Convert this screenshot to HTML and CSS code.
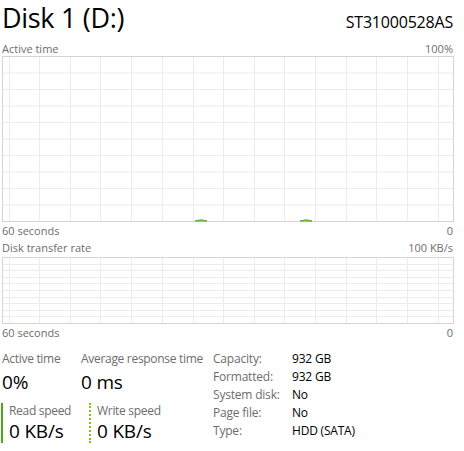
FILE: index.html
```html
<!DOCTYPE html>
<html lang="en">
<head>
  <meta charset="UTF-8">
  <title>Disk 1 (D:)</title>
  <link rel="stylesheet" href="styles.css">
</head>
<body>
  <div class="page">

    <div class="header">
      <h1 class="title">Disk 1 (D:)</h1>
      <div class="model">ST31000528AS</div>
    </div>

    <!-- Active time chart -->
    <div class="axis top">
      <span>Active time</span>
      <span>100%</span>
    </div>
    <svg class="chart big" width="452" height="166" viewBox="0 0 452 166">
      <g stroke="#ececec" stroke-width="1">
        <line x1="0" y1="17" x2="452" y2="17"/>
        <line x1="0" y1="33.5" x2="452" y2="33.5"/>
        <line x1="0" y1="50" x2="452" y2="50"/>
        <line x1="0" y1="66.5" x2="452" y2="66.5"/>
        <line x1="0" y1="83" x2="452" y2="83"/>
        <line x1="0" y1="99.5" x2="452" y2="99.5"/>
        <line x1="0" y1="116" x2="452" y2="116"/>
        <line x1="0" y1="132.5" x2="452" y2="132.5"/>
        <line x1="0" y1="149" x2="452" y2="149"/>
        <line x1="7.5" y1="0" x2="7.5" y2="166"/>
        <line x1="37.5" y1="0" x2="37.5" y2="166"/>
        <line x1="68.5" y1="0" x2="68.5" y2="166"/>
        <line x1="98.5" y1="0" x2="98.5" y2="166"/>
        <line x1="129.5" y1="0" x2="129.5" y2="166"/>
        <line x1="160.5" y1="0" x2="160.5" y2="166"/>
        <line x1="191.5" y1="0" x2="191.5" y2="166"/>
        <line x1="221.5" y1="0" x2="221.5" y2="166"/>
        <line x1="252.5" y1="0" x2="252.5" y2="166"/>
        <line x1="282.5" y1="0" x2="282.5" y2="166"/>
        <line x1="313.5" y1="0" x2="313.5" y2="166"/>
        <line x1="344.5" y1="0" x2="344.5" y2="166"/>
        <line x1="374.5" y1="0" x2="374.5" y2="166"/>
        <line x1="405.5" y1="0" x2="405.5" y2="166"/>
        <line x1="436.5" y1="0" x2="436.5" y2="166"/>
      </g>
      <rect x="0.5" y="0.5" width="451" height="165" fill="none" stroke="#d4d4d4"/>
      <g fill="#a6d66a" stroke="#5fae2e" stroke-width="1">
        <path d="M193 165 Q199 162.5 205 165 Z"/>
        <path d="M298 165 Q304 162.5 310 165 Z"/>
      </g>
    </svg>
    <div class="axis">
      <span>60 seconds</span>
      <span>0</span>
    </div>

    <!-- Transfer rate chart -->
    <div class="axis">
      <span>Disk transfer rate</span>
      <span>100 KB/s</span>
    </div>
    <svg class="chart small" width="452" height="67" viewBox="0 0 452 67">
      <g stroke="#ececec" stroke-width="1">
        <line x1="0" y1="7.5" x2="452" y2="7.5"/>
        <line x1="0" y1="13.5" x2="452" y2="13.5"/>
        <line x1="0" y1="20.5" x2="452" y2="20.5"/>
        <line x1="0" y1="26.5" x2="452" y2="26.5"/>
        <line x1="0" y1="33.5" x2="452" y2="33.5"/>
        <line x1="0" y1="40.5" x2="452" y2="40.5"/>
        <line x1="0" y1="46.5" x2="452" y2="46.5"/>
        <line x1="0" y1="53.5" x2="452" y2="53.5"/>
        <line x1="0" y1="59.5" x2="452" y2="59.5"/>
        <line x1="7.5" y1="0" x2="7.5" y2="67"/>
        <line x1="37.5" y1="0" x2="37.5" y2="67"/>
        <line x1="68.5" y1="0" x2="68.5" y2="67"/>
        <line x1="98.5" y1="0" x2="98.5" y2="67"/>
        <line x1="129.5" y1="0" x2="129.5" y2="67"/>
        <line x1="160.5" y1="0" x2="160.5" y2="67"/>
        <line x1="191.5" y1="0" x2="191.5" y2="67"/>
        <line x1="221.5" y1="0" x2="221.5" y2="67"/>
        <line x1="252.5" y1="0" x2="252.5" y2="67"/>
        <line x1="282.5" y1="0" x2="282.5" y2="67"/>
        <line x1="313.5" y1="0" x2="313.5" y2="67"/>
        <line x1="344.5" y1="0" x2="344.5" y2="67"/>
        <line x1="374.5" y1="0" x2="374.5" y2="67"/>
        <line x1="405.5" y1="0" x2="405.5" y2="67"/>
        <line x1="436.5" y1="0" x2="436.5" y2="67"/>
      </g>
      <rect x="0.5" y="0.5" width="451" height="66" fill="none" stroke="#d4d4d4"/>
    </svg>
    <div class="axis">
      <span>60 seconds</span>
      <span>0</span>
    </div>

    <!-- Stats -->
    <div class="stats">
      <div class="live">
        <div class="live-row">
          <div class="stat first">
            <div class="stat-label">Active time</div>
            <div class="stat-value">0%</div>
          </div>
          <div class="stat">
            <div class="stat-label">Average response time</div>
            <div class="stat-value">0 ms</div>
          </div>
        </div>
        <div class="live-row">
          <div class="stat speed read">
            <div class="stat-label">Read speed</div>
            <div class="stat-value">0 KB/s</div>
          </div>
          <div class="stat speed write">
            <div class="stat-label">Write speed</div>
            <div class="stat-value">0 KB/s</div>
          </div>
        </div>
      </div>

      <table class="props">
        <tr><td class="key">Capacity:</td><td>932 GB</td></tr>
        <tr><td class="key">Formatted:</td><td>932 GB</td></tr>
        <tr><td class="key">System disk:</td><td>No</td></tr>
        <tr><td class="key">Page file:</td><td>No</td></tr>
        <tr><td class="key">Type:</td><td>HDD (SATA)</td></tr>
      </table>
    </div>

  </div>
</body>
</html>
```

FILE: styles.css
```css
body {
  margin: 0;
  background: #ffffff;
  color: #000000;
  font-family: 'Open Sans', 'Noto Sans', sans-serif;
}

.page {
  width: 452px;
  padding-left: 2px;
}

.header {
  display: flex;
  justify-content: space-between;
  align-items: baseline;
  height: 40px;
}

.title {
  margin: 0;
  font-size: 27px;
  font-weight: 400;
  line-height: 36px;
  letter-spacing: -0.3px;
}

.model {
  font-size: 16px;
  letter-spacing: -0.2px;
  margin-right: 1px;
}

.axis {
  display: flex;
  justify-content: space-between;
  font-size: 11px;
  line-height: 16px;
  color: #6d6d6d;
  height: 16px;
  padding-top: 1px;
}

.axis span:last-child {
  margin-right: 1px;
}

.chart {
  display: block;
}

.big {
  margin-top: -1px;
}

.small {
  margin-top: 1px;
}

.stats {
  display: flex;
  align-items: flex-start;
  margin-top: 9px;
}

.live {
  width: 211px;
}

.live-row {
  display: flex;
}

.stat {
  white-space: nowrap;
}

.stat.first {
  width: 79px;
}

.stat-label {
  font-size: 12px;
  line-height: 18px;
  color: #6d6d6d;
  letter-spacing: -0.3px;
}

.stat-value {
  font-size: 19px;
  line-height: 28px;
  letter-spacing: -0.2px;
}

.speed {
  padding-left: 6px;
  margin-top: 7px;
}

.speed .stat-label {
  line-height: 16px;
}

.speed .stat-value {
  line-height: 24px;
}

.read {
  width: 80px;
  border-left: 2px solid #4ca71c;
  margin-left: -1px;
}

.write {
  border-left: 2px dotted #7fc31c;
}

.props {
  border-collapse: collapse;
  font-size: 12px;
}

.props td {
  padding: 0;
  height: 18px;
  line-height: 18px;
  letter-spacing: -0.2px;
  white-space: nowrap;
}

.props .key {
  width: 79px;
  color: #6d6d6d;
}
```
